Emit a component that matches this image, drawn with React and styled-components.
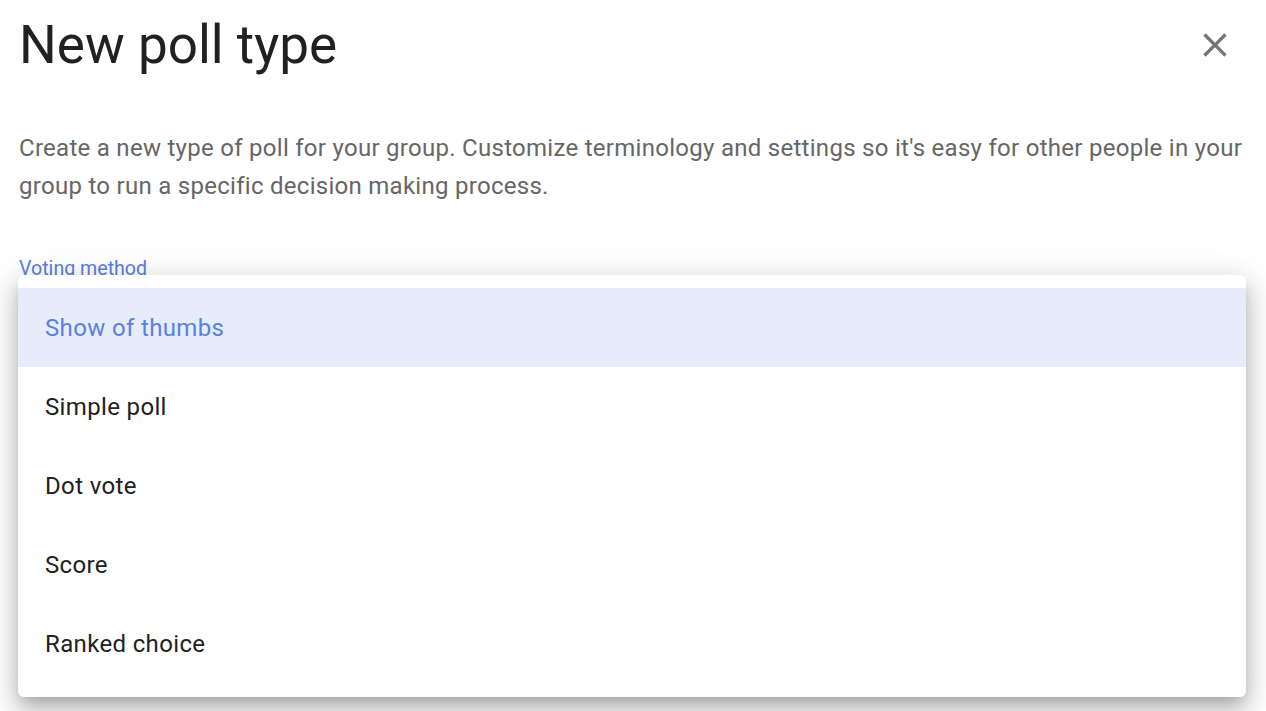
import styled, { createGlobalStyle } from "styled-components";

const GlobalStyle = createGlobalStyle`
  body {
    margin: 0;
    background: #ffffff;
    font-family: Roboto, "Liberation Sans", sans-serif;
  }
`;

const Dialog = styled.div`
  position: relative;
  width: 1266px;
  height: 711px;
  overflow: hidden;
  padding: 0 16px 0 19px;
  box-sizing: border-box;
`;

const Header = styled.div`
  display: flex;
  align-items: center;
  justify-content: space-between;
  height: 90px;
`;

const Title = styled.h1`
  margin: 0;
  font-size: 53px;
  font-weight: 400;
  color: #212121;
  letter-spacing: 0;
`;

const CloseButton = styled.button`
  display: flex;
  align-items: center;
  justify-content: center;
  width: 48px;
  height: 48px;
  margin-right: 11px;
  border: none;
  background: none;
  padding: 0;
  color: #757575;
`;

const Description = styled.p`
  margin: 39px 0 0;
  font-size: 24px;
  letter-spacing: 0.28px;
  line-height: 38px;
  color: #666666;
`;

const Field = styled.div`
  margin-top: 52px;
`;

const Label = styled.div`
  font-size: 19.6px;
  color: #5b80e0;
`;

const Menu = styled.ul`
  position: absolute;
  left: 18px;
  top: 275px;
  width: 1228px;
  margin: 0;
  padding: 13px 0;
  list-style: none;
  background: #ffffff;
  border-radius: 6px;
  box-shadow: 0 8px 14px -5px rgba(0, 0, 0, 0.2), 0 16px 26px 2px rgba(0, 0, 0, 0.14),
    0 6px 30px 5px rgba(0, 0, 0, 0.12);
`;

const Option = styled.li`
  display: flex;
  align-items: center;
  height: 79.2px;
  padding: 0 27px;
  font-size: 24px;
  letter-spacing: 0.35px;
  color: ${(p) => (p.$active ? "#5b80e0" : "#212121")};
  background: ${(p) => (p.$active ? "#e6ecf9" : "transparent")};
`;

const options = ["Show of thumbs", "Simple poll", "Dot vote", "Score", "Ranked choice"];

export default function App() {
  return (
    <Dialog>
      <GlobalStyle />
      <Header>
        <Title>New poll type</Title>
        <CloseButton aria-label="Close">
          <svg width="40" height="40" viewBox="0 0 24 24" fill="currentColor">
            <path d="M19 6.41 17.59 5 12 10.59 6.41 5 5 6.41 10.59 12 5 17.59 6.41 19 12 13.41 17.59 19 19 17.59 13.41 12z" />
          </svg>
        </CloseButton>
      </Header>
      <Description>
        Create a new type of poll for your group. Customize terminology and settings so it's easy for other people in your
        group to run a specific decision making process.
      </Description>
      <Field>
        <Label>Voting method</Label>
      </Field>
      <Menu>
        {options.map((o, i) => (
          <Option key={o} $active={i === 0}>
            {o}
          </Option>
        ))}
      </Menu>
    </Dialog>
  );
}
